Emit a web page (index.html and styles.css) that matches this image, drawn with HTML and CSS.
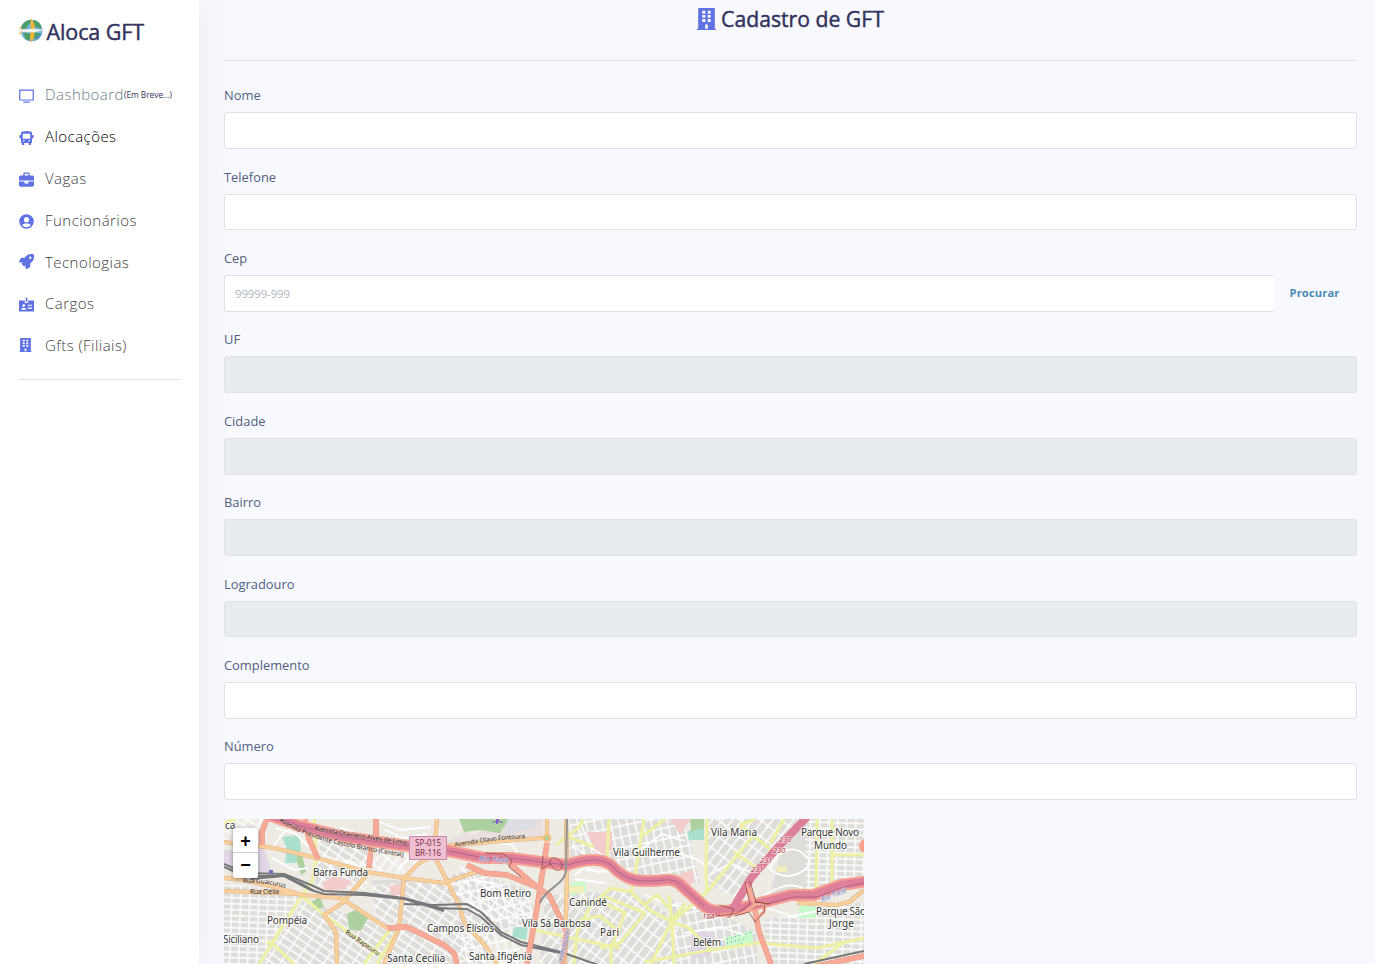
FILE: index.html
```html
<!DOCTYPE html>
<html lang="pt-BR">
<head>
<meta charset="utf-8">
<title>Aloca GFT</title>
<link rel="stylesheet" href="styles.css">
</head>
<body>
<div class="layout">
<aside class="sidebar">
  <a class="brand">
    <svg class="brand-logo" viewBox="0 0 26 26"><defs><clipPath id="globe"><circle cx="13" cy="13" r="11.3"/></clipPath></defs><g clip-path="url(#globe)"><path fill="#77b5df" d="M0 0h26v26H0z"/><path fill="#4d9d68" d="M2 8l5-5 6-2-2 5-4 5-5 2zM15 1l6 3 3 7-6-1-3-4zM4 15l8 1-1 8-4-2zM16 15l7 1-4 5-4 1z"/><path fill="#5793bd" d="M18 20l5-4 1 3-6 6z"/></g><path fill="#f5b52b" d="M12.800 0l3 6 .7 7-1 7-2.500 6-1.600-7 1.200-6-.6-7z"/><path fill="#f3c878" d="M0 8l3 3v5l-3 2 1-5z"/><path fill="#f7f7f3" stroke="#d5d8d8" stroke-width=".4" d="M1 12l14-.6 11 1-10 2.300-15-.3z"/></svg>
    <span>Aloca GFT</span>
  </a>
  <nav class="menu">
    <a class="item muted"><svg class="icon" viewBox="0 0 16 16"><path fill="none" stroke="#5e72e4" stroke-width="1.3" d="M.8 2.200h14.400v10.600H.8z"/><path fill="#5e72e4" d="M4.500 14.400h7v1.300h-7z"/></svg><span>Dashboard</span><small>(Em Breve...)</small></a>
    <a class="item active"><svg class="icon" viewBox="0 0 15 15"><path fill="#5e72e4" fill-rule="evenodd" d="M2 2.500Q3 1 7.500 1T13 2.500V5h1.200l.6 1-.6 2.500H13V13H2V8.500H.8L.2 6l.6-1H2zM3.800 3.700v5h7.400v-5zM4 10.200v1.400h1.400v-1.400zM9.600 10.200v1.400H11v-1.400z"/><path fill="#5e72e4" d="M3 13h2.200v2H3zM9.800 13H12v2H9.800z"/></svg><span>Alocações</span></a>
    <a class="item"><svg class="icon low" viewBox="0 0 15 15"><path fill="#5e72e4" fill-rule="evenodd" d="M4.300 3.500V1.300L5.300.5h4.400l1 .8v2.200h3L15 4.600v4H0v-4l1.300-1.100zM5.600 3.500h3.800V1.800H5.600zM0 9.600h5.500v1.800h4V9.600H15v4l-1.300 1.200H1.300L0 13.600z"/></svg><span>Vagas</span></a>
    <a class="item"><svg class="icon low" viewBox="0 0 496 512"><path fill="#5e72e4" d="M248 8a248 248 0 100 496 248 248 0 000-496zm0 96a88 88 0 110 176 88 88 0 010-176zm0 344c-59 0-111-27-146-68 19-36 56-60 99-60 12 0 24 8 47 8s35-8 47-8c43 0 80 24 99 60-35 41-87 68-146 68z"/></svg><span>Funcionários</span></a>
    <a class="item"><svg class="icon up" viewBox="0 0 512 512"><path fill="#5e72e4" d="M505 19c-1-6-6-11-12-12-32-7-57-7-82-7-103 0-165 55-211 128H95c-16 0-35 12-43 27L3 253c-7 14 0 35 21 35h104l-23 23c-13 13-13 33 0 46l50 50c13 13 33 13 46 0l23-23v104c0 21 21 28 36 21l98-49c15-8 26-27 26-43V312c73-47 128-109 128-211 0-25 0-50-7-82zM384 168a40 40 0 110-80 40 40 0 010 80z"/></svg><span>Tecnologias</span></a>
    <a class="item"><svg class="icon" viewBox="0 0 15 15"><path fill="#5e72e4" fill-rule="evenodd" d="M0 3.600h5.800V6h3.400V3.600H15v11H0zM4.700 7.200a1.400 1.400 0 100 2.800 1.400 1.400 0 000-2.800zM2.200 12.700h5c0-1.300-1-2-2.500-2s-2.500.7-2.500 2zM8.700 7.700v1.100h4.300V7.700zM8.700 10.500v1.200h4.300v-1.200z"/><path fill="#5e72e4" d="M6.700.6h1.700v4.300H6.700z"/></svg><span>Cargos</span></a>
    <a class="item"><svg class="icon bld" viewBox="0 0 448 512"><use href="#building"/></svg><span>Gfts (Filiais)</span></a>
  </nav>
  <hr class="rule side">
</aside>
<main class="content">
  <h2 class="title"><svg class="title-icon" viewBox="0 0 448 512" preserveAspectRatio="none"><g id="building"><path fill="#5e72e4" fill-rule="evenodd" d="M0 512v-30h28V0h392v482h28v30H0zM124 64h72v68h-72zM252 64h72v68h-72zM124 160h72v68h-72zM252 160h72v68h-72zM124 256h72v68h-72zM252 256h72v68h-72zM192 384h64v98h-64z"/></g></svg><span>Cadastro de GFT</span></h2>
  <hr class="rule">
  <form class="form">
    <div class="field"><label>Nome</label><input class="control"></div>
    <div class="field"><label>Telefone</label><input class="control"></div>
    <div class="field"><label>Cep</label><div class="group"><input class="control joined" placeholder="99999-999"><button class="search" type="button">Procurar</button></div></div>
    <div class="field"><label>UF</label><input class="control" disabled></div>
    <div class="field"><label>Cidade</label><input class="control" disabled></div>
    <div class="field"><label>Bairro</label><input class="control" disabled></div>
    <div class="field"><label>Logradouro</label><input class="control" disabled></div>
    <div class="field"><label>Complemento</label><input class="control"></div>
    <div class="field"><label>Número</label><input class="control"></div>
  </form>
  <div class="map">
    <svg class="tiles" width="640" height="145" viewBox="224 819 640 145">
      <defs>
        <pattern id="s1" width="9" height="6" patternUnits="userSpaceOnUse" patternTransform="rotate(2)"><path class="st" d="M0 1h9M2 0v6"/></pattern>
        <pattern id="s2" width="12" height="7" patternUnits="userSpaceOnUse" patternTransform="rotate(34)"><path class="st" d="M0 2h12M3 0v7"/></pattern>
        <pattern id="s3" width="13" height="8" patternUnits="userSpaceOnUse" patternTransform="rotate(-52)"><path class="st" d="M0 2h13M4 0v8"/></pattern>
        <pattern id="s4" width="8" height="11" patternUnits="userSpaceOnUse" patternTransform="rotate(-12)"><path class="st" d="M0 2h8M2 0v11"/></pattern>
      </defs>
      <path fill="#eeebe5" d="M224 819h640v145H224z"/>
      <g fill="#dfddda">
        <path d="M224 883l80 12-46 69h-34z"/><path d="M304 900l90 30-25 34H262z"/><path d="M319 862l48 12-22 16-30-6zM320 826l50 14-2 24-48-10z"/><path d="M372 880l95 0 30 45-12 39H380z"/><path d="M440 880l25-10 65 20 5 35-38 8z"/><path d="M545 895l85-5 50 30-8 44H540z"/><path d="M570 819h115l15 65-65-10-30-15h-35z"/><path d="M708 819h90l-60 80-30-15z"/><path d="M780 855l20-36h64v60l-60 14-35 4z"/><path d="M672 900l60 20 25 12v32h-85z"/><path d="M762 920l102-18v62H770z"/>
      </g>
      <path fill="url(#s1)" d="M224 883l80 12-46 69h-34zM762 920l102-18v62H770zM805 819h59v64l-58 12z"/>
      <path fill="url(#s2)" d="M304 900l90 30-25 34H262zM320 826l50 14-2 50-50-4zM372 885l95-6 30 45-12 39H380zM224 819h45l-5 30-40-10zM475 880l55 14 4 34-50-8z"/>
      <path fill="url(#s3)" d="M708 819h90l-60 80-30-15zM545 895l85-5 50 30-8 44H540zM375 850l60 8-30 17-33-6z"/>
      <path fill="url(#s4)" d="M440 880l25-10 65 20 5 35-38 8zM570 819h115l15 65-65-10-30-15h-35zM672 900l60 20 25 12v32h-85zM460 930h60v34h-60z"/>
      <g class="areas">
        <path fill="#e0d6e6" d="M224 850h20l20-2 8 23-20 5-28-9zM691 935l14-6 9 8-3 19-20 3z"/>
        <path fill="#e8dfdf" d="M440 845l25-13 10 3 20-16h48v18l-45 6-64 9z"/>
        <path fill="#add19e" d="M459 819h50l-9 14-20-3-16 2z"/>
        <path fill="#dedde3" d="M508 819h30l-3 9-32 7z"/>
        <path fill="#aae0cb" d="M282 837l17-2 2 14-4 14h-12l2-14zM687 832l17-10v18h-15zM514 927h14l-2 13-14-3z"/>
        <path fill="#add19e" d="M347 914l8-4 13 8-7 13-12-2zM296 857l6-3 4 18-5 3zM312 901l8-4 4 10-10 3zM690 819h14v9l-13 3z"/>
        <path fill="#c8facc" d="M724 938l28-8 1 14-26 6zM800 903l16 2v13h-18zM570 883l16-2v11l-15 4z"/>
        <path fill="#f4cccc" d="M587 832h25v18l-14 8zM671 819h20l-11 16zM677 875l15-5 3 11-12 8zM323 882l11-6 18 5-7 8-20 2zM389 886l12-2 5 10-14 2z"/>
        <path fill="#f1edbd" d="M568 886h16v7h-16zM777 866h10v6h-10z"/>
        <path fill="none" stroke="#567cc2" stroke-width="1" stroke-dasharray="1 3" d="M727 939l25-7M727 943l20-5M726 948l16-5"/>
      </g>
      <g class="free">
        <path d="M272 848l12-16 30-10M316 842l27-14 32 14M650 858l30-5 20 8 6 6M770 868c12-24 27-22 38-10 5 9-8 17-20 18-12 0-20-8-24-15M765 895c15-10 28-12 38-7M645 895l25 10 26 3M640 850l22-16 23 7M710 875l20-12 22 10M580 822l10 25 15 10M586 870l27 2 10 9M470 842l42 2 10 17M685 933l35-6 24 8M767 908l25 8 42-8M272 858l22 12 14-2M330 866l20-5 14 9M575 879l30 4M400 866l16-12M276 828l20 6 12 12M380 822l20 8 30-3M385 830l18 8 24-4M460 866l12 14 26 4M572 845l14 10M574 875l12-8 14 6"/>
      </g>
      <g class="yellow">
        <path d="M314 819l2 39-4 24-10 13-43 69M301 895l23 20 57 40M391 928l-27 36M399 928l-22 36M274 945l20 19M274 945l-7-4M224 823l12-4"/>
        <path d="M609 819l-2 40M644 819l-10 63-3 10-20-4-20 17-14 27-3 32M631 892l20 19 20 10M601 895l44 18-25 30-20 5M534 930l47 10 39 8M598 900l27 13-14 35v16M580 920l20-4 15 12M556 845l22-17 6-9M569 837l25 10"/>
        <path d="M707 819l-1 53 1 20-35 30M754 835l-47 57M740 825l31 25-10 17M740 825l15-6M734 852l23 16M770 844l14-25M669 895l3 27 2 42M644 905l13-10 12 13M651 964l20-42M644 962l67-12 46-7 60 5 47-10M711 950l-22-22-17-6M817 819l-1 76M832 819v69M832 855h32M665 819l-21 16M686 903l-15 18M844 942l-30 22"/>
      </g>
      <g class="orange-c"><path id="ora" d="M224 842l50 6 43 10 50 14 37 6 40 5 23-8 15-5M224 878l20 2 30 7 28 8 39 3 46 30M224 891l77 3M367 875l-25 28-18 12 12 17 1 32M437 819l-3 36-17 10-13 13-5 50-15 36M434 855l25 50 5 17 23 26 10 16M434 848l20-3 60-5 30-2M547 819v22M566 819l1 50-2 95M797 903l40 2 12-3 15-12"/></g>
      <g class="orange"><use href="#ora"/></g>
      <g class="rail"><path d="M224 864l20 9 40 1 27 11 13 6 40 2 40 5 40 11M224 867l20 9 40 0 27 14 13 4 40 1 40 4 40 12M250 879l34-3 20 9 12 7M404 904l30 1 33-1 14 8 20 20 20 10 40 10 40 14M434 908l33 1 14 8 20 18 20 10 40 8"/><path d="M804 964l60-13"/></g>
      <g class="salmon-c"><path id="sal" d="M267 819l-5 13v13M376 819v15l-5 14-2 20M387 928l20-1 37 18 10 8 3 11M547 843l-6 39-4 26-10 56M467 865l17 8 23 2 30 12 12 8 18 37-5 32M501 855l16 15 20 17M746 882l8 23 5 27 12 32M305 819l4 20 9 20M812 967l52-11"/></g>
      <g class="salmon"><use href="#sal"/></g>
      <path class="h1" d="M269 815l31 11 45 11 55 8 44 5 40 8 27 0 30 4 26 3q14-5 27-5 10 0 17 5 12 13 24 15 12 2 29 0 12-2 20 8l20 18q10 9 37 2l27-7 23-6h23l27-10 28-4"/>
      <path class="h2" d="M269 815l31 11 45 11 55 8 44 5 40 8 27 0 30 4 26 3q14-5 27-5 10 0 17 5 12 13 24 15 12 2 29 0 12-2 20 8l20 18q10 9 37 2l27-7 23-6h23l27-10 28-4"/>
      <path class="h2" d="M809 815l-32 33-26 30-13 22q-5 11-12 14"/>
      <path class="hl" d="M269 815l31 11 45 11 55 8 44 5 40 8 27 0 30 4 26 3q14-5 27-5 10 0 17 5 12 13 24 15 12 2 29 0 12-2 20 8l20 18M744 910l27-7 23-6h23l27-10 20-4"/>
      <path class="salmon one" d="M746 884l9 21-12 8-23 2M755 905l10-2-1 9-8 7"/>
      <path class="ramp" d="M485 853l19 1 8 7-3 6 12 10M543 856l-1 13 8-5c-2-8 9-8 12 0 1 8-8 9-11 0M745 882l5 22-12 9-22 3M719 905l15 4-5 9M754 902l11 1-1 9-9 10-6-10-14 4M750 881l6 21 14 2"/>
      <path fill="none" stroke="#929292" stroke-width="2" d="M567 819l-1 50c0 16-21 19-26 34"/>
      <circle cx="547" cy="838" r="3.3" fill="#add19e" stroke="#f4bd7c" stroke-width="2"/>
      <circle cx="866" cy="846" r="7" fill="#f9a08c"/>
      <path fill="#8461c4" d="M496 819h3v2l4 1v1l-5-1v2h-2v-2l-4 1v-1l4-1z"/>
      <path fill="#6c73b8" d="M269 870h4v4h-4z"/>
      <g class="shield"><rect x="409.500" y="836.500" width="37" height="23"/><text x="415" y="846" textLength="26">SP-015</text><text x="415" y="856" textLength="26">BR-116</text></g>
      <g class="place">
        <text x="225" y="829">ca</text><text x="313" y="876" textLength="55">Barra Funda</text><text x="267" y="924" textLength="40">Pompéia</text><text x="223" y="943" textLength="36">Siciliano</text><text x="427" y="932" textLength="67">Campos Elísios</text><text x="387" y="962" textLength="58">Santa Cecília</text><text x="480" y="897" textLength="51">Bom Retiro</text><text x="569" y="906" textLength="38">Canindé</text><text x="522" y="927" textLength="69">Vila Sá Barbosa</text><text x="600" y="936" textLength="19">Pari</text><text x="469" y="960" textLength="63">Santa Ifigênia</text><text x="613" y="856" textLength="67">Vila Guilherme</text><text x="711" y="836" textLength="46">Vila Maria</text><text x="801" y="836" textLength="58">Parque Novo</text><text x="814" y="849" textLength="33">Mundo</text><text x="816" y="915" textLength="50">Parque São</text><text x="829" y="927" textLength="25">Jorge</text><text x="693" y="946" textLength="28">Belém</text>
      </g>
      <defs><path id="t1" d="M314 830Q355 838 415 846"/><path id="t2" d="M279 821Q305 838 345 846T415 859"/><path id="t3" d="M455 847Q490 840 530 838"/><path id="t4" d="M243 883Q265 882 289 889"/><path id="t5" d="M345 933L381 958"/></defs>
      <g class="road"><text><textPath href="#t1" textLength="94">Avenida Otaviano Alves de Lima</textPath></text><text><textPath href="#t2" textLength="130">Avenida Presidente Castelo Branco (Central)</textPath></text><text><textPath href="#t3" textLength="71">Avenida Olavo Fontoura</textPath></text><text><textPath href="#t4" textLength="43">Rua Guaicurus</textPath></text><text x="250" y="894" textLength="29">Rua Clélia</text><text><textPath href="#t5" textLength="40">Rua Itapicuru</textPath></text></g>
      <g class="river"><text x="479" y="861" textLength="29" transform="rotate(4 479 861)">Rio Tietê</text><text x="822" y="902" textLength="27" transform="rotate(-22 822 902)">Rio Tietê</text><text x="562" y="963" textLength="34" transform="rotate(-76 562 963)">manduateí</text></g>
      <g class="exit"><text x="779" y="842">230</text><text x="773" y="853">230</text><text x="760" y="863">231</text><text x="751" y="872">231</text><text x="702" y="919">18A</text></g>
    </svg>
    <div class="zoom"><a>+</a><a>−</a></div>
  </div>
</main>
</div>
</body>
</html>
```
FILE: styles.css
```css
* { box-sizing: border-box; }
body { margin: 0; height: 964px; overflow: hidden; background: #f8f9fe; font-family: "Open Sans", sans-serif; color: #525f7f; }
.layout { display: flex; height: 964px; }
.sidebar { width: 199px; flex: none; padding: 16px 19px 0; background: #fff; box-shadow: 0 0 26px rgba(136, 152, 170, .15); }
.brand { display: flex; height: 57.5px; align-items: flex-start; color: #32325d; font-size: 21.500px; font-weight: 400; -webkit-text-stroke: .45px #32325d; line-height: 32px; white-space: nowrap; letter-spacing: -.1px; }
.brand-logo { width: 25px; height: 25px; margin: 2px 2.500px 0 0; }
.menu { display: flex; flex-direction: column; }
.item { display: flex; align-items: center; height: 41.82px; color: #404040; font-size: 15px; font-weight: 300; letter-spacing: .46px; white-space: nowrap; }
.icon { width: 15px; height: 15px; margin: 2px 11px 0 0; flex: none; }
.icon.low { margin-top: 3px; }
.icon.up { margin-top: -1px; }
.icon.bld { width: 13px; height: 14px; margin: 0 13px 0 0; }
.muted { color: #6c7a88; }
.active { color: #000; }
.item small { font-size: 8.300px; font-weight: 400; letter-spacing: 0; color: #32325d; }
.rule { height: 1px; border: 0; margin: 0; background: #dfe1e6; }
.side { margin-top: 12.400px; }
.content { flex: 1; min-width: 0; padding: 0 18px 0 25px; }
.title { display: flex; justify-content: center; align-items: center; gap: 5px; height: 38px; margin: 0 0 22px; color: #32325d; font-size: 21.200px; font-weight: 400; -webkit-text-stroke: .45px #32325d; }
.title span { margin-top: -1px; }
.title-icon { width: 19px; height: 22px; }
.form { padding-top: 24.300px; }
.field { height: 81.4px; }
.field label { display: block; height: 27px; line-height: 21.700px; font-size: 12.900px; }
.control { display: block; width: 100%; height: 36.800px; padding: 0 10px; border: 1px solid #dee2e6; border-radius: 3px; background: #fff; font: 11.400px "Open Sans", sans-serif; letter-spacing: -.1px; }
.control::placeholder { color: #adb5bd; opacity: 1; }
.control:disabled { background: #e9ecef; }
.group { display: flex; }
.joined { flex: 1; border-right: 0; border-radius: 3px 0 0 3px; }
.search { width: 83px; height: 36px; padding: 0 2px 1px 0; border: 0; background: transparent; color: #4b8ab5; font: 700 11.200px "Open Sans", sans-serif; letter-spacing: .1px; }
.map { position: relative; width: 640px; height: 145px; overflow: hidden; margin-top: 1.1px; font-family: "Noto Sans", sans-serif; }
.tiles { display: block; }
.zoom { position: absolute; left: 9px; top: 9px; width: 25px; border-radius: 2px; background: #fff; box-shadow: 0 1px 4px rgba(0, 0, 0, .4); }
.zoom a { display: block; height: 24px; color: #000; font: 700 18px/26px "Liberation Sans", sans-serif; text-align: center; }
.zoom a + a { height: 26px; line-height: 24px; border-top: 1px solid #ccc; }
.st { fill: none; stroke: #fff; stroke-width: 1.4; }
.free, .yellow, .orange, .orange-c, .salmon, .salmon-c, .ramp, .rail, .h1, .h2, .hl { fill: none; stroke-linejoin: round; }
.free { stroke: #fff; stroke-width: 1.8; }
.yellow { stroke: #edf1a4; stroke-width: 3.2; }
.orange-c { stroke: #d6a878; stroke-width: 4.2; }
.orange { stroke: #f9cf9c; stroke-width: 3.4; }
.rail { stroke: #777; stroke-width: 2; }
.salmon-c { stroke: #d98973; stroke-width: 5.4; }
.salmon { stroke: #f8aa97; stroke-width: 4.8; }
.salmon.one { stroke-width: 3; }
.h1 { stroke: #f5a091; stroke-width: 12; }
.h2 { stroke: #de8099; stroke-width: 8; }
.hl { stroke: #a95a80; stroke-width: .8; }
.ramp { stroke: #853c3a; stroke-width: .7; }
.shield rect { fill: #efc0d1; stroke: #c88aa4; }
.shield text { fill: #7c2c49; font-size: 8px; }
.place text { fill: #333; stroke: rgba(255, 255, 255, .75); stroke-width: 2; paint-order: stroke; font-size: 10px; }
.road text { fill: #30271f; font-size: 6.500px; stroke: rgba(255, 235, 220, .35); stroke-width: 1; paint-order: stroke; }
.river text { fill: #5888bd; stroke: rgba(255, 230, 245, .65); stroke-width: 1; paint-order: stroke; font-size: 7px; font-style: italic; }
.exit text { fill: #b23440; stroke: rgba(255, 255, 255, .7); stroke-width: 1.5; paint-order: stroke; font-size: 7.500px; font-style: italic; }
```
